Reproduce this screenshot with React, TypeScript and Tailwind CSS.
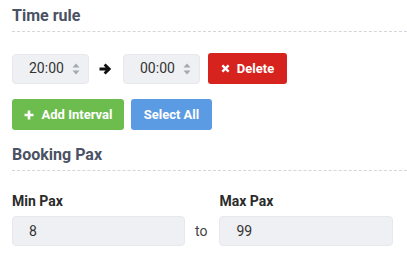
import { useState } from "react";

function SortIcon() {
  return (
    <svg width="8" height="12" viewBox="0 0 8 12" className="shrink-0">
      <path d="M4 0.5 L7.5 4.5 H0.5 Z" fill="#a3a8b1" />
      <path d="M4 11.5 L7.5 7.5 H0.5 Z" fill="#a3a8b1" />
    </svg>
  );
}

function TimeBox({ value }: { value: string }) {
  return (
    <div className="w-[77px] h-[30px] bg-[#eef0f4] rounded-[4px] border border-[#e6e8ec] flex items-center justify-between pl-[16px] pr-[8px]">
      <span className="text-[14px] text-[#333]">{value}</span>
      <SortIcon />
    </div>
  );
}

function SectionTitle({ children }: { children: React.ReactNode }) {
  return (
    <div className="pb-[5px] border-b border-dashed border-[#d3d6db]">
      <h2 className="text-[16px] leading-5 font-bold text-[#4a5263]">{children}</h2>
    </div>
  );
}

export default function App() {
  const [min, setMin] = useState("8");
  const [max, setMax] = useState("99");

  return (
    <div
      className="w-[407px] h-[262px] bg-white pl-3 pt-[6px] overflow-hidden"
      style={{ fontFamily: "Roboto, 'Liberation Sans', sans-serif" }}
    >
      <SectionTitle>Time rule</SectionTitle>

      {/* Interval row */}
      <div className="flex items-center mt-[21px]">
        <TimeBox value="20:00" />
        <svg width="12" height="12" viewBox="0 0 12 12" className="ml-[10px] mr-[12px]">
          <path d="M0.5 6 H10 M5.6 1.4 L10.2 6 L5.6 10.6" stroke="#111" strokeWidth="2.8" fill="none" />
        </svg>
        <TimeBox value="00:00" />
        <button className="ml-[8px] w-[79px] h-[31px] bg-[#d7231e] rounded-[3px] flex items-center justify-center gap-[7px] text-white text-[13px] font-bold">
          <svg width="9" height="9" viewBox="0 0 10 10">
            <path d="M1.5 1.5 L8.5 8.5 M8.5 1.5 L1.5 8.5" stroke="#fff" strokeWidth="2.6" />
          </svg>
          Delete
        </button>
      </div>

      {/* Actions */}
      <div className="flex items-center gap-[7px] mt-[15px]">
        <button className="w-[112px] h-[31px] bg-[#6dbd4e] rounded-[3px] flex items-center justify-center gap-[8px] text-white text-[13px] font-bold">
          <svg width="10" height="10" viewBox="0 0 10 10">
            <path d="M5 0.5 V9.5 M0.5 5 H9.5" stroke="#fff" strokeWidth="2.6" />
          </svg>
          Add Interval
        </button>
        <button className="w-[81px] h-[31px] bg-[#5b9be4] rounded-[3px] text-white text-[13px] font-bold">
          Select All
        </button>
      </div>

      <div className="mt-[15px]">
        <SectionTitle>Booking Pax</SectionTitle>
      </div>

      {/* Pax */}
      <div className="flex items-end mt-[21px]">
        <div className="flex flex-col gap-[6px]">
          <label className="text-[14px] leading-[18px] font-bold text-[#2b2b2b]">Min Pax</label>
          <input
            value={min}
            onChange={(e) => setMin(e.target.value)}
            className="w-[173px] h-[30px] bg-[#eef0f4] border border-[#e6e8ec] rounded-[4px] px-[16px] text-[14px] text-[#333] outline-none"
          />
        </div>
        <span className="h-[30px] flex items-center ml-[10px] mr-[12px] text-[14px] text-[#444]">to</span>
        <div className="flex flex-col gap-[6px]">
          <label className="text-[14px] leading-[18px] font-bold text-[#2b2b2b]">Max Pax</label>
          <input
            value={max}
            onChange={(e) => setMax(e.target.value)}
            className="w-[174px] h-[30px] bg-[#eef0f4] border border-[#e6e8ec] rounded-[4px] px-[16px] text-[14px] text-[#333] outline-none"
          />
        </div>
      </div>
    </div>
  );
}
